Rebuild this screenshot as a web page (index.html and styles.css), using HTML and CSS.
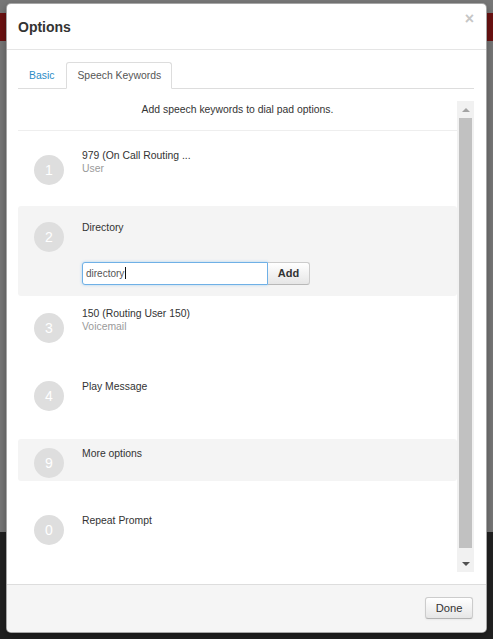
FILE: index.html
```html
<!DOCTYPE html>
<html>
<head>
<meta charset="utf-8">
<title>Options</title>
<link rel="stylesheet" href="styles.css">
</head>
<body>
<div class="page">
  <div class="page-top"></div>
  <div class="page-band"></div>
  <div class="page-main"></div>
  <div class="page-foot"></div>
</div>

<div class="modal">
  <div class="modal-header">
    <h3 class="modal-title">Options</h3>
    <span class="close">×</span>
  </div>
  <div class="modal-body">
    <ul class="tabs">
      <li><a>Basic</a></li>
      <li class="active"><a>Speech Keywords</a></li>
    </ul>
    <div class="scroll">
      <div class="scroll-content">
        <div class="intro">Add speech keywords to dial pad options.</div>
        <div class="list">
          <div class="row row-first">
            <div class="num">1</div>
            <div class="info two">
              <div class="name">979 (On Call Routing ...</div>
              <div class="sub">User</div>
            </div>
          </div>
          <div class="row editing">
            <div class="num">2</div>
            <div class="info">
              <div class="name">Directory</div>
              <div class="input-group">
                <div class="input">directory<span class="caret"></span></div>
                <div class="btn-add">Add</div>
              </div>
            </div>
          </div>
          <div class="row row-tall">
            <div class="num">3</div>
            <div class="info two">
              <div class="name">150 (Routing User 150)</div>
              <div class="sub">Voicemail</div>
            </div>
          </div>
          <div class="row">
            <div class="num">4</div>
            <div class="info">
              <div class="name">Play Message</div>
            </div>
          </div>
          <div class="row hover">
            <div class="num">9</div>
            <div class="info">
              <div class="name">More options</div>
            </div>
          </div>
          <div class="row">
            <div class="num">0</div>
            <div class="info">
              <div class="name">Repeat Prompt</div>
            </div>
          </div>
        </div>
      </div>
      <div class="scrollbar">
        <div class="sb-btn"><span class="tri-up"></span></div>
        <div class="sb-thumb"></div>
        <div class="sb-gap"></div>
        <div class="sb-btn"><span class="tri-down"></span></div>
      </div>
    </div>
  </div>
  <div class="modal-footer">
    <button class="btn">Done</button>
  </div>
</div>
</body>
</html>
```

FILE: styles.css
```css
html, body {
  margin: 0;
  padding: 0;
}
body {
  width: 493px;
  height: 639px;
  overflow: hidden;
  position: relative;
  background: #222222;
  font-family: "Liberation Sans", Arial, sans-serif;
  font-size: 10.4px;
  color: #333333;
}

/* dimmed page behind */
.page {
  display: flex;
  flex-direction: column;
  height: 639px;
}
.page-top { height: 13px; background: #777777; }
.page-band { height: 28px; background: #6b1111; }
.page-main { height: 491px; background: #757575; }
.page-foot { flex: 1; background: #212121; }

/* modal */
.modal {
  position: absolute;
  left: 6px;
  top: 3px;
  width: 481px;
  box-sizing: border-box;
  background: #ffffff;
  border: 1px solid rgba(0, 0, 0, 0.35);
  border-radius: 5px;
  box-shadow: 0 3px 7px rgba(0, 0, 0, 0.3);
}

.modal-header {
  height: 46px;
  box-sizing: border-box;
  border-bottom: 1px solid #e5e5e5;
  padding: 0 12px 0 11px;
  display: flex;
  align-items: center;
  justify-content: space-between;
}
.modal-title {
  margin: 0;
  font-size: 14px;
  font-weight: bold;
  color: #333333;
  line-height: 20px;
}
.close {
  align-self: flex-start;
  margin-top: 5px;
  font-size: 16px;
  font-weight: bold;
  line-height: 20px;
  color: #c6c6c6;
}

.modal-body {
  padding: 12px 12px 12px 11px;
}

/* tabs */
.tabs {
  list-style: none;
  margin: 0;
  padding: 0;
  display: flex;
  border-bottom: 1px solid #dddddd;
}
.tabs li {
  margin-bottom: -1px;
  margin-right: 1px;
}
.tabs a {
  display: block;
  padding: 0 10px;
  line-height: 25px;
  border: 1px solid transparent;
  border-radius: 3px 3px 0 0;
  color: #2b8cc6;
}
.tabs .active a {
  color: #555555;
  background: #ffffff;
  border-color: #dddddd #dddddd transparent #dddddd;
}

/* scroll region */
.scroll {
  margin-top: 12px;
  height: 471px;
  display: flex;
}
.scroll-content {
  flex: 1;
  overflow: hidden;
}
.intro {
  text-align: center;
  line-height: 12.8px;
  padding: 3px 0 13px;
  border-bottom: 1px solid #eeeeee;
  color: #333333;
}
.list {
  padding-top: 7px;
}

.row {
  display: flex;
  gap: 18px;
  height: 67px;
  box-sizing: border-box;
  padding: 17px 0 0 16px;
  border-radius: 3px;
}
.row-first { height: 68px; }
.row-tall { height: 68px; }
.row.editing {
  height: 90px;
  padding-top: 16px;
  background: #f4f4f4;
}
.row.hover {
  height: 42px;
  margin-top: 8px;
  margin-bottom: 17px;
  padding-top: 9px;
  background: #f4f4f4;
}

.num {
  flex: none;
  width: 30px;
  height: 30px;
  border-radius: 50%;
  background: #dedede;
  color: #ffffff;
  font-size: 14px;
  line-height: 30px;
  text-align: center;
}
.info {
  line-height: 12.8px;
}
.info.two {
  margin-top: -5px;
}
.name { color: #333333; }
.sub { color: #9a9a9a; }

.input-group {
  display: flex;
  margin-top: 27px;
}
.input {
  width: 186px;
  height: 23px;
  box-sizing: border-box;
  border: 1px solid #6fb0e6;
  border-radius: 3px 0 0 3px;
  box-shadow: 0 0 3px rgba(82, 168, 236, 0.45);
  background: #ffffff;
  padding: 0 3px;
  line-height: 21px;
  font-size: 10px;
  color: #555555;
  display: flex;
  align-items: center;
}
.caret {
  display: inline-block;
  width: 1px;
  height: 12px;
  background: #111111;
  margin-left: 1px;
}
.btn-add {
  width: 42px;
  height: 23px;
  box-sizing: border-box;
  border: 1px solid #cccccc;
  border-left: none;
  border-bottom-color: #b8b8b8;
  border-radius: 0 3px 3px 0;
  background: linear-gradient(#ffffff, #e6e6e6);
  font-size: 11px;
  font-weight: bold;
  color: #333333;
  text-align: center;
  line-height: 21px;
}

/* fake scrollbar */
.scrollbar {
  width: 17px;
  flex: none;
  background: #f1f1f1;
  display: flex;
  flex-direction: column;
}
.sb-btn {
  height: 17px;
  display: flex;
  align-items: center;
  justify-content: center;
}
.sb-thumb {
  height: 430px;
  margin: 0 2px;
  background: #c1c1c1;
}
.sb-gap { height: 7px; }
.tri-up {
  width: 0;
  height: 0;
  border-left: 4px solid transparent;
  border-right: 4px solid transparent;
  border-bottom: 4px solid #a3a3a3;
}
.tri-down {
  width: 0;
  height: 0;
  border-left: 4px solid transparent;
  border-right: 4px solid transparent;
  border-top: 4px solid #505050;
}

/* footer */
.modal-footer {
  border-top: 1px solid #dddddd;
  background: #f5f5f5;
  padding: 12px 13px 13px;
  display: flex;
  justify-content: flex-end;
  border-radius: 0 0 5px 5px;
}
.btn {
  width: 48px;
  height: 22px;
  padding: 0;
  border: 1px solid #cccccc;
  border-bottom-color: #b3b3b3;
  border-radius: 3px;
  background: linear-gradient(#ffffff, #e6e6e6);
  box-shadow: 0 1px 2px rgba(0, 0, 0, 0.05);
  font-family: "Liberation Sans", Arial, sans-serif;
  font-size: 11.2px;
  color: #333333;
  line-height: 20px;
}
```
